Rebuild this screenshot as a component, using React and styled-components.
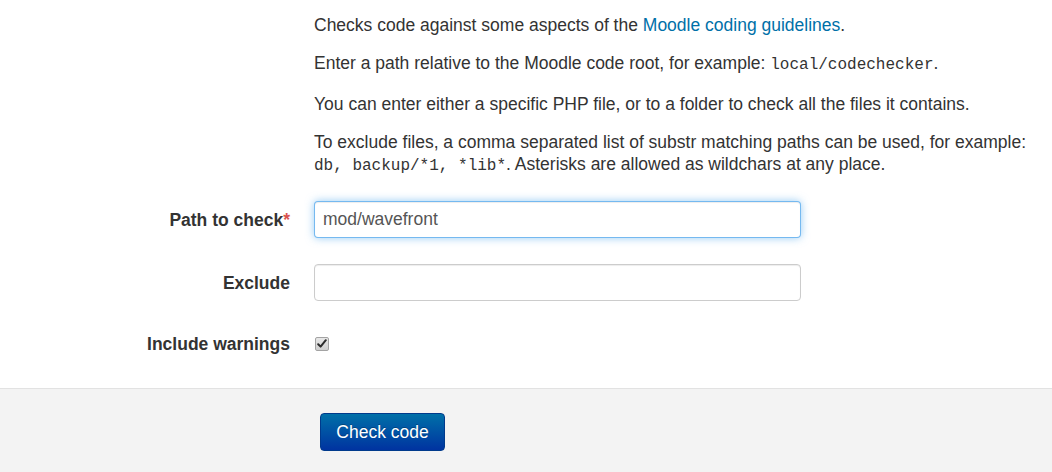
import React from "react";
import styled, { createGlobalStyle } from "styled-components";

const Global = createGlobalStyle`
  html, body { margin: 0; padding: 0; background: #fff; }
  body {
    font-family: "Liberation Sans", Arial, sans-serif;
    font-size: 17.5px;
    color: #333;
  }
`;

const Page = styled.div`
  width: 1052px;
  height: 472px;
  overflow: hidden;
  display: flex;
  flex-direction: column;
`;

const Intro = styled.div`
  padding: 14px 10px 0 314px;
`;

const Para = styled.p`
  margin: 0 0 16.3px;
  line-height: 22px;
`;

const Link = styled.a`
  color: #0070a8;
  text-decoration: none;
`;

const Code = styled.code`
  font-family: "Liberation Mono", "DejaVu Sans Mono", monospace;
  font-size: 16px;
  color: #333;
`;

const Form = styled.div`
  display: flex;
  flex-direction: column;
  gap: 26px;
  margin-top: 8px;
`;

const Row = styled.div`
  display: grid;
  grid-template-columns: 290px 487px;
  column-gap: 24px;
  align-items: center;
  min-height: ${(p) => p.$h || 37}px;
`;

const Label = styled.label`
  text-align: right;
  font-weight: bold;
  line-height: 22px;
`;

const Req = styled.span`
  color: #d9534f;
  font-weight: bold;
`;

const Input = styled.input`
  box-sizing: border-box;
  width: 487px;
  height: 37px;
  padding: 4px 8px;
  font-family: "Liberation Sans", Arial, sans-serif;
  font-size: 17.5px;
  color: #555;
  border: 1px solid ${(p) => (p.$focus ? "rgba(82,168,236,0.8)" : "#ccc")};
  border-radius: 4px;
  box-shadow: ${(p) =>
    p.$focus
      ? "inset 0 1px 1px rgba(0,0,0,0.075), 0 0 8px rgba(82,168,236,0.6)"
      : "inset 0 1px 1px rgba(0,0,0,0.075)"};
  outline: none;
`;

const CheckBox = styled.span`
  box-sizing: border-box;
  width: 14px;
  height: 14px;
  margin-left: 1px;
  border: 1px solid #a3a3a3;
  border-radius: 2px;
  background: linear-gradient(#e8e8e8, #cfcfcf);
  display: inline-flex;
  align-items: center;
  justify-content: center;
`;

const Footer = styled.div`
  margin-top: 28px;
  flex: 1;
  background: #f3f3f3;
  border-top: 1px solid #e2e2e2;
  padding: 24px 0 0 320px;
`;

const Button = styled.button`
  box-sizing: border-box;
  width: 125px;
  height: 38px;
  font-family: "Liberation Sans", Arial, sans-serif;
  font-size: 17.5px;
  color: #fff;
  border: 1px solid #003a8c;
  border-radius: 4px;
  background: linear-gradient(#0070a8, #0033a0);
  text-shadow: 0 -1px 0 rgba(0,0,0,0.25);
  padding: 0;
`;

export default function App() {
  return (
    <Page>
      <Global />
      <Intro>
        <Para>
          Checks code against some aspects of the{" "}
          <Link href="#">Moodle coding guidelines</Link>.
        </Para>
        <Para>
          Enter a path relative to the Moodle code root, for example:{" "}
          <Code>local/codechecker</Code>.
        </Para>
        <Para>
          You can enter either a specific PHP file, or to a folder to check all
          the files it contains.
        </Para>
        <Para>
          To exclude files, a comma separated list of substr matching paths can
          be used, for example: <Code>db, backup/*1, *lib*</Code>. Asterisks
          are allowed as wildchars at any place.
        </Para>
      </Intro>
      <Form>
        <Row>
          <Label>
            Path to check<Req>*</Req>
          </Label>
          <Input $focus defaultValue="mod/wavefront" />
        </Row>
        <Row>
          <Label>Exclude</Label>
          <Input defaultValue="" />
        </Row>
        <Row $h={33}>
          <Label>Include warnings</Label>
          <CheckBox>
            <svg width="10" height="9" viewBox="0 0 10 9">
              <path
                d="M1.2 5.2 L3.6 7.6 L8.8 1.2"
                fill="none"
                stroke="#2b2b2b"
                strokeWidth="2"
                strokeLinecap="round"
                strokeLinejoin="round"
              />
            </svg>
          </CheckBox>
        </Row>
      </Form>
      <Footer>
        <Button>Check code</Button>
      </Footer>
    </Page>
  );
}
